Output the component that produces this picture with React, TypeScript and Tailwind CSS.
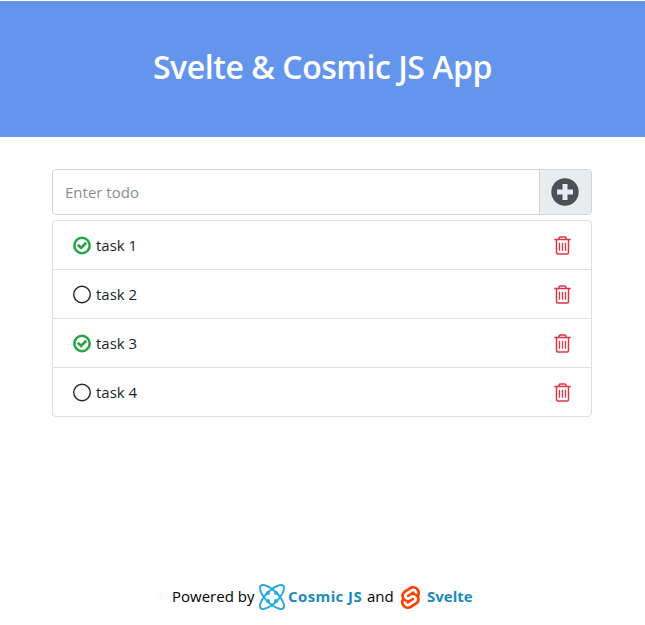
import React from "react";
import { SiSvelte } from "react-icons/si";

interface Todo {
  title: string;
  done: boolean;
}

const todos: Todo[] = [
  { title: "task 1", done: true },
  { title: "task 2", done: false },
  { title: "task 3", done: true },
  { title: "task 4", done: false },
];

function CheckedIcon() {
  return (
    <svg width="18" height="19" viewBox="0 0 18 19" fill="none" stroke="#28a745">
      <circle cx="9" cy="9.5" r="7.7" strokeWidth="2.6" />
      <path d="M4.8 8.7 8.1 11.9 13.2 6.8" strokeWidth="2.8" />
    </svg>
  );
}

function UncheckedIcon() {
  return (
    <svg width="18" height="19" viewBox="0 0 18 19" fill="none" stroke="#212529">
      <circle cx="9" cy="9.5" r="8.3" strokeWidth="1.4" />
    </svg>
  );
}

function TrashIcon() {
  return (
    <svg width="17" height="19" viewBox="0 0 17 19" fill="none" stroke="#dc3545" strokeWidth="1.5">
      <path d="M.3 3.6H16.7M5 3.4V2.2Q5 1 6.2 1H10.8Q12 1 12 2.2V3.4M2.5 3.8V16.6Q2.5 18.1 4 18.1H13Q14.5 18.1 14.5 16.6V3.8" />
      <path d="M5.5 6.8V14.8M8.5 6.8V14.8M11.5 6.8V14.8" strokeWidth="1.3" />
    </svg>
  );
}

function PlusIcon() {
  return (
    <svg width="28" height="28" viewBox="0 0 28 28">
      <circle cx="14" cy="14" r="13.7" fill="#495057" />
      <path d="M14 6V22M6 14H22" stroke="#e9ecef" strokeWidth="5" strokeLinejoin="round" />
    </svg>
  );
}

function CosmicIcon() {
  return (
    <svg width="26" height="26" viewBox="-13 -13 26 26" fill="none" stroke="#29abe2" strokeWidth="2">
      <path d="M-11.2-11.2C-9-13.3-3.5-10.5 0-8.2Q5-5 8.2 0C10.5 3.5 13.3 9 11.2 11.2S3.5 10.5 0 8.2Q-5 5-8.2 0C-10.5-3.5-13.3-9-11.2-11.2Z" />
      <path d="M11.2-11.2C9-13.3 3.5-10.5 0-8.2Q-5-5-8.2 0C-10.5 3.5-13.3 9-11.2 11.2S-3.5 10.5 0 8.2Q5 5 8.2 0C10.5-3.5 13.3-9 11.2-11.2Z" />
      <g fill="#29abe2" stroke="none">
        <circle cx="-4" cy="-4" r="2" />
        <circle cx="4" cy="-4" r="2" />
        <circle cx="-4" cy="4" r="2" />
        <circle cx="4" cy="4" r="2" />
      </g>
    </svg>
  );
}

export default function App() {
  return (
    <div className="flex h-[625px] w-[645px] flex-col bg-white pt-px font-['Open_Sans','Noto_Sans',sans-serif] text-[#212529]">
      <header className="flex h-[136px] shrink-0 justify-center bg-[#6495ed] pt-[46px]">
        <h1 className="h-10 text-[32px] leading-10 font-semibold tracking-[-0.45px] whitespace-nowrap text-white">
          Svelte &amp; Cosmic JS App
        </h1>
      </header>
      <main className="mt-8 ml-[52px] w-[540px]">
        <div className="flex h-[46px] overflow-hidden rounded border border-[#ced4da]">
          <input
            className="min-w-0 flex-1 px-3 text-[15px] outline-none placeholder:text-[#868e96]"
            placeholder="Enter todo"
          />
          <button className="flex w-[52px] items-center justify-center border-l border-[#ced4da] bg-[#e9ecef] pr-px" aria-label="Add">
            <PlusIcon />
          </button>
        </div>
        <ul className="mt-[5px] rounded border border-[#dfdfdf]">
          {todos.map((todo) => (
            <li key={todo.title} className="flex h-[49px] items-center border-b border-[#dfdfdf] px-5 pt-px last:h-12 last:border-b-0">
              {todo.done ? <CheckedIcon /> : <UncheckedIcon />}
              <span className="-mt-px ml-[5px] text-[15px] leading-6">{todo.title}</span>
              <span className="-mt-px ml-auto">
                <TrashIcon />
              </span>
            </li>
          ))}
        </ul>
      </main>
      <footer className="mt-auto mb-[15px] ml-[172px] flex h-[26px] items-center text-[15px] whitespace-nowrap text-black">
        <span className="-mt-0.5 w-[87px]">Powered by</span>
        <CosmicIcon />
        <a className="-mt-0.5 ml-[3px] w-[79px] font-bold tracking-[0.4px] text-[#1a8cba]">Cosmic JS</a>
        <span className="-mt-0.5 w-[32px]">and</span>
        <SiSvelte className="h-[23px] w-[23px] text-[#ff3e00]" />
        <a className="-mt-0.5 ml-[5px] font-bold text-[#1a8cba]">Svelte</a>
      </footer>
    </div>
  );
}
